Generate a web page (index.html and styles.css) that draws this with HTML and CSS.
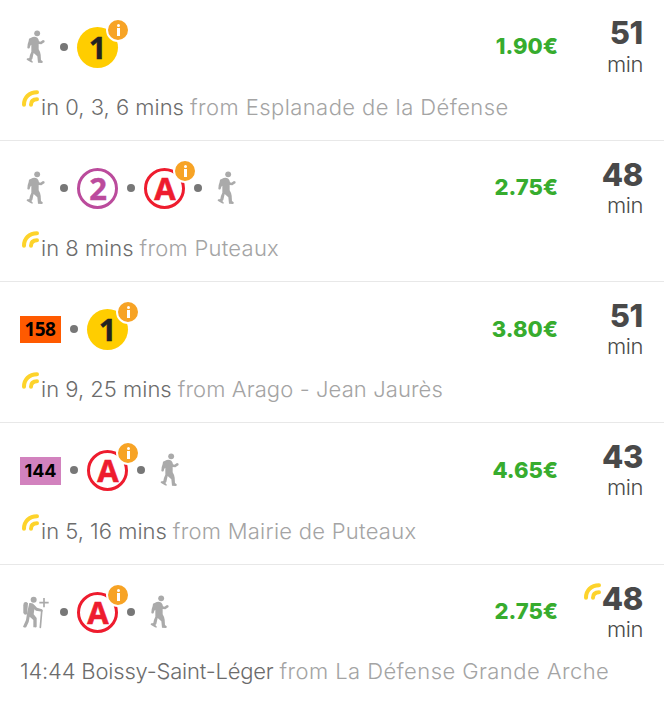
FILE: index.html
```
<!DOCTYPE html>
<html lang="en">
<head>
<meta charset="utf-8">
<title>Routes</title>
<link rel="stylesheet" href="styles.css">
</head>
<body>
<svg class="defs" aria-hidden="true">
  <symbol id="walk" viewBox="60 81 93 123">
    <circle cx="111.5" cy="100" r="8.8"/>
    <path d="M98 111Q106 109 112 113Q116 116 117 124L121 125L129 120Q135 120 134 126L124 133L116 132L116 148Q121 156 122 164L123 180L128 184Q130 189 125 189L114 188L112 169L101 159L97 177L94 180L99 186Q98 189 93 187L80 179Q80 174 85 175L88 174Q90 162 94 155L94 134L91 137L89 144Q85 148 82 143Q82 132 86 123L87 116Z"/>
  </symbol>
  <symbol id="hiker" viewBox="60 84 93 123">
    <circle cx="101" cy="107" r="9"/>
    <path d="M79 114Q70 113 70 124V145Q70 151 75 152L81 151L84 118Z"/>
    <path d="M88 117Q98 115 104 124L111 131L126 136Q131 140 127 143L108 140L103 136L101 151L110 162V188Q109 191 104 190H100V168L89 158L86 174L79 189Q75 193 69 188L78 168L82 143Z"/>
    <path class="line" d="M125 143L121 190"/>
    <path class="line plus" d="M132 102V130M118 116H146"/>
  </symbol>
  <symbol id="live" viewBox="0 0 17 17">
    <path class="wave" d="M2 14.7C2 7.5 7.2 2.2 15 2.2M9 14.7C9 11.2 11.3 9.2 15 9.2"/>
  </symbol>
</svg>
<main class="routes">
  <article class="route">
    <div class="summary">
      <div class="legs">
        <svg class="icon"><use href="#walk"/></svg><i class="dot"></i>
        <span class="line-badge metro1">1<b class="info"><i></i></b></span>
      </div>
      <div class="price">1.90€</div>
      <div class="time"><strong>51</strong><span>min</span></div>
    </div>
    <p class="depart"><svg class="live"><use href="#live"/></svg><span class="when">in 0, 3, 6 mins</span><span class="from open">from Esplanade de la Défense</span></p>
  </article>
  <article class="route">
    <div class="summary">
      <div class="legs">
        <svg class="icon"><use href="#walk"/></svg><i class="dot"></i>
        <span class="line-badge tram2">2</span><i class="dot"></i>
        <span class="line-badge rer">A<b class="info"><i></i></b></span><i class="dot"></i>
        <svg class="icon"><use href="#walk"/></svg>
      </div>
      <div class="price">2.75€</div>
      <div class="time"><strong>48</strong><span>min</span></div>
    </div>
    <p class="depart"><svg class="live"><use href="#live"/></svg><span class="when">in 8 mins</span><span class="from">from Puteaux</span></p>
  </article>
  <article class="route">
    <div class="summary">
      <div class="legs">
        <span class="bus bus158">158</span><i class="dot"></i>
        <span class="line-badge metro1">1<b class="info"><i></i></b></span>
      </div>
      <div class="price">3.80€</div>
      <div class="time"><strong>51</strong><span>min</span></div>
    </div>
    <p class="depart"><svg class="live"><use href="#live"/></svg><span class="when">in 9, 25 mins</span><span class="from snug">from Arago - Jean Jaurès</span></p>
  </article>
  <article class="route">
    <div class="summary">
      <div class="legs">
        <span class="bus bus144">144</span><i class="dot"></i>
        <span class="line-badge rer">A<b class="info"><i></i></b></span><i class="dot"></i>
        <svg class="icon"><use href="#walk"/></svg>
      </div>
      <div class="price">4.65€</div>
      <div class="time"><strong>43</strong><span>min</span></div>
    </div>
    <p class="depart"><svg class="live"><use href="#live"/></svg><span class="when">in 5, 16 mins</span><span class="from">from Mairie de Puteaux</span></p>
  </article>
  <article class="route">
    <div class="summary">
      <div class="legs">
        <svg class="icon"><use href="#hiker"/></svg><i class="dot"></i>
        <span class="line-badge rer">A<b class="info"><i></i></b></span><i class="dot"></i>
        <svg class="icon"><use href="#walk"/></svg>
      </div>
      <div class="price">2.75€</div>
      <div class="time"><svg class="live time-live"><use href="#live"/></svg><strong>48</strong><span>min</span></div>
    </div>
    <p class="depart scheduled"><span class="when">14:44 Boissy-Saint-Léger</span><span class="from open">from La Défense Grande Arche</span></p>
  </article>
</main>
</body>
</html>
```
FILE: styles.css
```
* { box-sizing: border-box; }
body {
  margin: 0;
  background: #fff;
  color: #494949;
  font-family: Inter, "Open Sans", sans-serif;
  overflow: hidden;
}
.defs { position: absolute; width: 0; height: 0; }
.route {
  height: 141px;
  padding: 16px 21px 0 20px;
  border-bottom: 1px solid #e8e8e8;
}
.route:nth-child(4) { height: 142px; }
.route:last-child { border-bottom: 0; }
.summary { display: flex; height: 63px; }
.legs { display: flex; align-items: center; gap: 9px; flex: 1; }
.icon { width: 31px; height: 41px; fill: #aaa; }
.line { fill: none; stroke: #aaa; stroke-width: 5; stroke-linecap: round; }
.plus { stroke-linecap: butt; }
.dot { width: 8px; height: 8px; border-radius: 50%; background: #777; margin-top: -2px; }
.line-badge {
  position: relative;
  width: 41px;
  height: 41px;
  border-radius: 50%;
  display: flex;
  align-items: center;
  justify-content: center;
  font: 700 31px/41px "Open Sans", sans-serif;
}
.metro1 { background: #ffcd00; color: #222; -webkit-text-stroke: .4px #222; }
.tram2 { border: 3px solid #bb4b9c; color: #bb4b9c; padding-left: 1px; -webkit-text-stroke: .4px #bb4b9c; }
.rer { border: 3px solid #ee1c2e; color: #ee1c2e; padding-left: 1px; -webkit-text-stroke: .6px #ee1c2e; }
.info {
  position: absolute;
  left: 29px;
  top: -9px;
  width: 24px;
  height: 24px;
  border: 2px solid #fff;
  border-radius: 50%;
  background: #f7a325;
  display: flex;
  flex-direction: column;
  align-items: center;
  padding-top: 4px;
}
.rer .info { left: 26px; top: -12px; }
.info::before { content: ""; width: 3px; height: 3px; border-radius: 50%; background: #fff; }
.info i { width: 3px; height: 8px; margin-top: 1px; background: #fff; }
.bus {
  width: 41px;
  height: 27px;
  display: flex;
  align-items: center;
  justify-content: center;
  color: #000;
  font: 700 19px/27px "Open Sans", sans-serif;
}
.bus158 { background: #ff5a00; letter-spacing: -.6px; padding: 0 1px 1px 0; }
.bus144 { height: 28px; background: #d282be; font: 700 18px/28px Inter, sans-serif; }
.price {
  width: 100px;
  margin-right: 14px;
  text-align: right;
  color: #37ac2e;
  font-size: 22px;
  font-weight: 800;
  line-height: 60px;
}
.route:nth-child(n+3) .price { line-height: 62px; }
.route:last-child .price { line-height: 60px; }
.time {
  position: relative;
  width: 71px;
  display: flex;
  flex-direction: column;
  align-items: flex-end;
  font-size: 22px;
  font-weight: 300;
}
.time strong { font-size: 31px; font-weight: 800; line-height: 34px; letter-spacing: -.3px; }
.route:nth-child(n+2) .time strong { position: relative; top: 1px; }
.time span { line-height: 28px; letter-spacing: -.4px; }
.live { width: 17px; height: 17px; }
.wave { fill: none; stroke: #fdd32b; stroke-width: 4; stroke-linecap: round; }
.time-live { position: absolute; left: 12px; top: 2px; }
.depart {
  display: flex;
  margin: 11px 0 0 2px;
  height: 34px;
  line-height: 34px;
  font-size: 22px;
  font-weight: 300;
  white-space: nowrap;
}
.route:nth-child(4) .depart { margin-top: 12px; }
.depart.scheduled { margin: 10px 0 0; }
.when { color: #6c6c6c; margin: 0 6px 0 2px; }
.scheduled .when { margin-left: 0; letter-spacing: -.2px; }
.from { color: #a4a4a4; letter-spacing: .26px; }
.from.open { letter-spacing: .43px; }
.from.snug { letter-spacing: .1px; }
```
